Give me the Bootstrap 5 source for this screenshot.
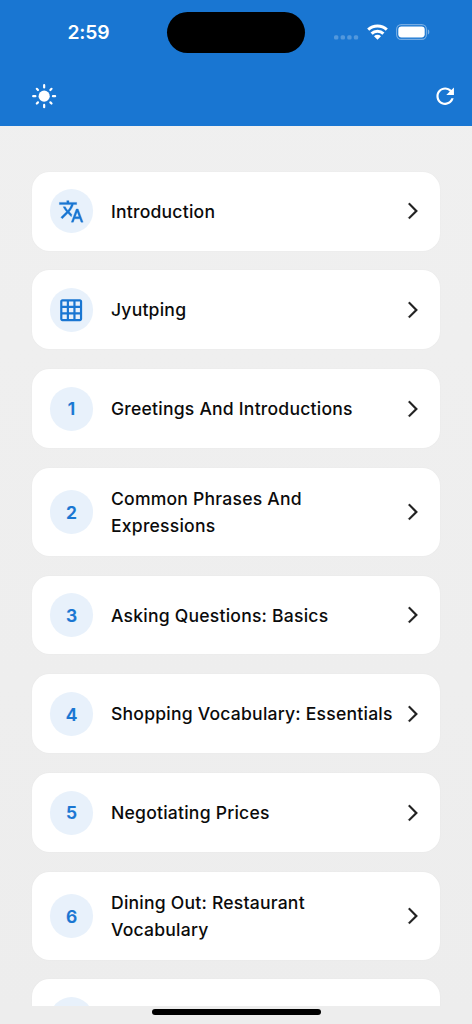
<!DOCTYPE html>
<html lang="en">
<head>
<meta charset="utf-8">
<meta name="viewport" content="width=device-width, initial-scale=1">
<title>Lessons</title>
<link href="https://cdn.jsdelivr.net/npm/bootstrap@5.3.0/dist/css/bootstrap.min.css" rel="stylesheet">
<style>
  :root { --blue: #1976d2; }
  body { font-family: Inter, "Liberation Sans", sans-serif; color: #0b0b0b; background: linear-gradient(#f0f0f0, #ededed); }
  svg { display: block; flex: none; }
  .app-top { background: var(--blue); height: 126.4px; }
  .status-row { height: 65.2px; display: grid; grid-template-columns: 167px 138px 1fr; align-items: center; }
  .clock { font-size: 19.3px; font-weight: 600; letter-spacing: -.1px; padding-left: 10px; }
  .island { height: 41px; background: #000; }
  .indicators { padding: 0 42px 1px 0; gap: 8px; }
  .tool-row { height: 61.2px; padding: 0 13.7px 0 30.8px; }
  .lesson-list { padding: 45.2px 32px 0; gap: 19.8px; }
  .lesson { background: #fff; border-radius: 17.5px; padding: 17.56px; gap: 17.56px; box-shadow: 0 0 2px rgba(0,0,0,.04); color: inherit; font-size: 17.56px; line-height: 26.34px; font-weight: 500; letter-spacing: .23px; }
  .lesson:hover { color: inherit; }
  .disc { width: 43.9px; height: 43.9px; flex: none; background: #e8f1fb; color: var(--blue); font-weight: 600; letter-spacing: 0; line-height: 1; }
  .disc-number { padding-top: 1.2px; -webkit-text-stroke: .2px var(--blue); }
  .lesson .title { margin-right: -17.56px; padding-top: .8px; margin-bottom: -.8px; }
  .home-area { height: 18px; background: #ededed; padding-top: 3px; }
  .home-bar { width: 169px; height: 6px; background: #000; }
</style>
</head>
<body>
<div class="vh-100 d-flex flex-column overflow-hidden">
  <header class="app-top flex-shrink-0 text-white">
    <div class="status-row">
      <div class="clock text-center">2:59</div>
      <div class="island rounded-pill"></div>
      <div class="indicators d-flex justify-content-end align-items-center">
        <svg width="25" height="16" viewBox="0 0 25 16" fill="#fff" fill-opacity=".25"><rect x="0" y="11.3" width="4.4" height="4.2" rx="1.5"/><rect x="6.6" y="11.3" width="4.4" height="4.2" rx="1.5"/><rect x="13.2" y="11.3" width="4.4" height="4.2" rx="1.5"/><rect x="19.8" y="11.3" width="4.4" height="4.2" rx="1.5"/></svg>
        <svg width="21" height="16" viewBox="0 0 21 16" fill="none" stroke="#fff" stroke-width="3"><path d="M1.2 5.7a13.4 13.4 0 0 1 18.6 0M4.6 9.6a8.4 8.4 0 0 1 11.8 0"/><path d="M10.5 15.8 7 12.3a5 5 0 0 1 7 0z" fill="#fff" stroke="none"/></svg>
        <svg width="34" height="16" viewBox="0 0 34 16"><rect x=".6" y=".6" width="29.8" height="14.8" rx="4.6" fill="none" stroke="#fff" stroke-opacity=".4" stroke-width="1.1"/><rect x="2.3" y="2.6" width="26.4" height="10.8" rx="3.1" fill="#fff"/><path d="M31.8 5.3q1.6.8 1.6 2.7t-1.6 2.7z" fill="#fff" fill-opacity=".45"/></svg>
      </div>
    </div>
    <div class="tool-row d-flex justify-content-between align-items-center">
      <svg width="26.34" height="26.34" viewBox="0 0 24 24" fill="#fff" stroke="#fff" stroke-width="2" stroke-linecap="round"><circle cx="12" cy="12" r="5.1" stroke="none"/><path d="M12 2v2M12 20v2M2 12h2M20 12h2M5.3 5.3l1.05 1.05M17.65 17.65l1.05 1.05M5.3 18.7l1.05-1.05M17.65 6.35 18.7 5.3"/></svg>
      <svg width="26.34" height="26.34" viewBox="0 0 24 24" fill="#fff"><path d="M17.65 6.35C16.2 4.9 14.21 4 12 4c-4.42 0-7.99 3.58-7.99 8s3.57 8 7.99 8c3.73 0 6.84-2.55 7.73-6h-2.08c-.82 2.33-3.04 4-5.65 4-3.31 0-6-2.69-6-6s2.69-6 6-6c1.66 0 3.14.69 4.22 1.78L13 11h7V4l-2.35 2.35z"/></svg>
    </div>
  </header>

  <svg width="0" height="0" class="position-absolute"><symbol id="go" viewBox="0 0 24 24"><path fill="#222" stroke="#222" stroke-width=".2" d="M6.23 20.23 8 22l10-10L8 2 6.23 3.77 14.46 12z"/></symbol></svg>

  <main class="flex-grow-1 overflow-hidden">
    <nav class="lesson-list d-flex flex-column">
      <a href="#" class="lesson d-flex align-items-center text-decoration-none">
        <span class="disc rounded-circle d-flex align-items-center justify-content-center"><svg width="26.34" height="26.34" viewBox="0 0 24 24" fill="currentColor" stroke="currentColor" stroke-width=".3" stroke-linejoin="round"><path d="M12.67 15.07l-2.34-2.51.03-.03c1.74-1.94 2.98-4.17 3.71-6.53H17V4h-7V2.4H8V4H1.3v1.99h10.87C11.5 7.92 10.44 9.75 9 11.35 8.07 10.32 7.3 9.19 6.69 8h-2c.73 1.63 1.73 3.17 2.98 4.56l-5.09 5.02L4 19l5-5 3.11 3.11.56-2.04zM18.4 10h-1.8L12.1 22H14l1.12-3h4.75L21 22h1.9l-4.5-12zm-2.52 7l1.62-4.33L19.12 17h-3.24z"/></svg></span>
        <span class="title flex-grow-1">Introduction</span><svg width="19.76" height="19.76"><use href="#go"/></svg>
      </a>
      <a href="#" class="lesson d-flex align-items-center text-decoration-none">
        <span class="disc rounded-circle d-flex align-items-center justify-content-center"><svg width="26.34" height="26.34" viewBox="0 0 24 24" fill="currentColor"><path d="M20 2H4c-1.1 0-2 .9-2 2v16c0 1.1.9 2 2 2h16c1.1 0 2-.9 2-2V4c0-1.1-.9-2-2-2zM8 20H4v-4h4v4zm0-6H4v-4h4v4zm0-6H4V4h4v4zm6 12h-4v-4h4v4zm0-6h-4v-4h4v4zm0-6h-4V4h4v4zm6 12h-4v-4h4v4zm0-6h-4v-4h4v4zm0-6h-4V4h4v4z"/></svg></span>
        <span class="title flex-grow-1">Jyutping</span><svg width="19.76" height="19.76"><use href="#go"/></svg>
      </a>
      <a href="#" class="lesson d-flex align-items-center text-decoration-none">
        <span class="disc disc-number rounded-circle d-flex align-items-center justify-content-center">1</span>
        <span class="title flex-grow-1">Greetings And Introductions</span><svg width="19.76" height="19.76"><use href="#go"/></svg>
      </a>
      <a href="#" class="lesson d-flex align-items-center text-decoration-none">
        <span class="disc disc-number rounded-circle d-flex align-items-center justify-content-center">2</span>
        <span class="title flex-grow-1">Common Phrases And<br>Expressions</span><svg width="19.76" height="19.76"><use href="#go"/></svg>
      </a>
      <a href="#" class="lesson d-flex align-items-center text-decoration-none">
        <span class="disc disc-number rounded-circle d-flex align-items-center justify-content-center">3</span>
        <span class="title flex-grow-1">Asking Questions: Basics</span><svg width="19.76" height="19.76"><use href="#go"/></svg>
      </a>
      <a href="#" class="lesson d-flex align-items-center text-decoration-none">
        <span class="disc disc-number rounded-circle d-flex align-items-center justify-content-center">4</span>
        <span class="title flex-grow-1">Shopping Vocabulary: Essentials</span><svg width="19.76" height="19.76"><use href="#go"/></svg>
      </a>
      <a href="#" class="lesson d-flex align-items-center text-decoration-none">
        <span class="disc disc-number rounded-circle d-flex align-items-center justify-content-center">5</span>
        <span class="title flex-grow-1">Negotiating Prices</span><svg width="19.76" height="19.76"><use href="#go"/></svg>
      </a>
      <a href="#" class="lesson d-flex align-items-center text-decoration-none">
        <span class="disc disc-number rounded-circle d-flex align-items-center justify-content-center">6</span>
        <span class="title flex-grow-1">Dining Out: Restaurant<br>Vocabulary</span><svg width="19.76" height="19.76"><use href="#go"/></svg>
      </a>
      <a href="#" class="lesson d-flex align-items-center text-decoration-none" aria-label="Next lesson">
        <span class="disc rounded-circle"></span>
      </a>
    </nav>
  </main>
  <footer class="home-area flex-shrink-0"><div class="home-bar rounded-pill mx-auto"></div></footer>
</div>
<script src="https://cdn.jsdelivr.net/npm/bootstrap@5.3.0/dist/js/bootstrap.bundle.min.js"></script>
</body>
</html>
